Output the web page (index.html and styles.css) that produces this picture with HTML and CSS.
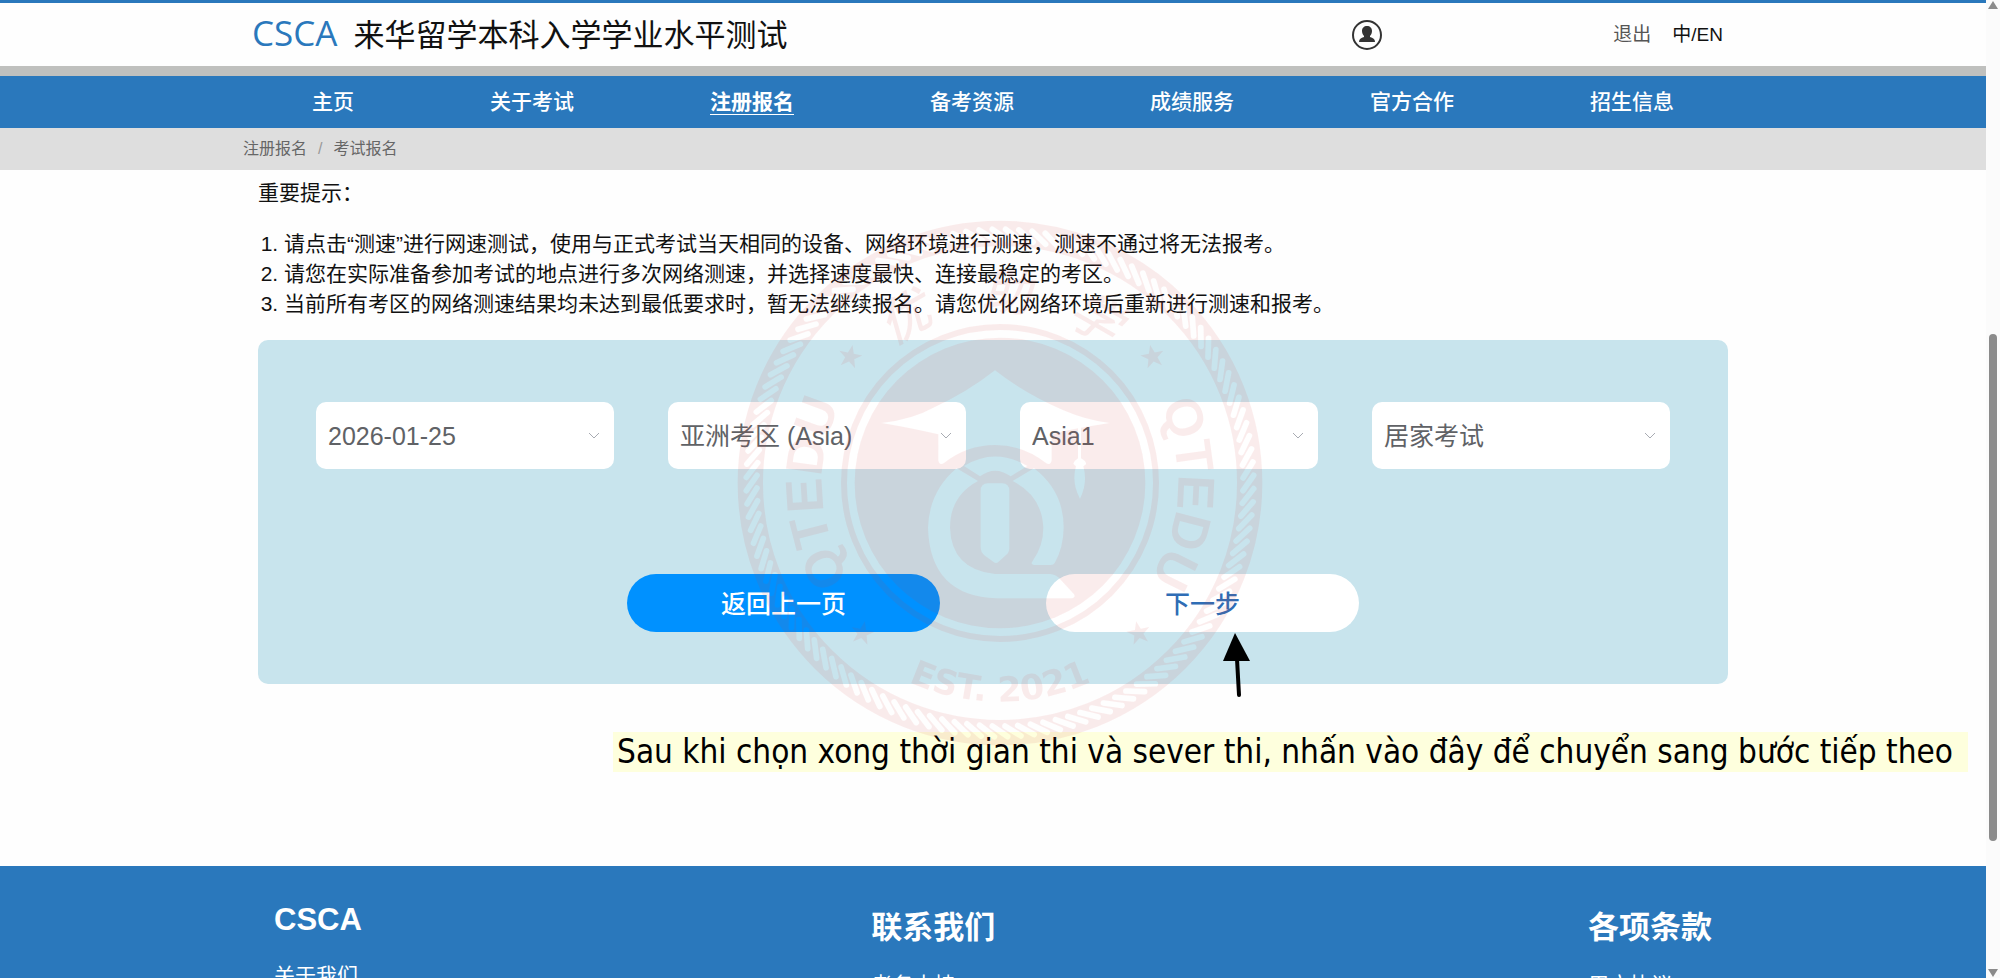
FILE: index.html
```html
<!DOCTYPE html>
<html lang="zh-CN">
<head>
    <meta charset="UTF-8">
    <meta name="viewport" content="width=device-width, initial-scale=1.0">
    <title>CSCA 考试报名</title>
    <link rel="stylesheet" href="styles.css">
</head>
<body>
    <div class="page">
        <header class="header">
            <div class="container header-inner">
                <h1 class="logo"><span class="logo-mark">CSCA</span>来华留学本科入学学业水平测试</h1>
                <div class="user">
                    <svg class="user-icon" viewBox="0 0 32 32" aria-hidden="true">
                        <circle cx="16" cy="16" r="14" fill="none" stroke="#333" stroke-width="2"/>
                        <path fill="#333" d="M16 7c3 0 5 2 5 5 0 2-1 4-2 5v1c3 1 5 2 5 5H8c0-3 2-4 5-5v-1c-1-1-2-3-2-5 0-3 2-5 5-5z"/>
                    </svg>
                    <a class="logout" href="#">退出</a>
                    <a class="lang" href="#">中/EN</a>
                </div>
            </div>
        </header>

        <nav class="nav">
            <a href="#">主页</a>
            <a href="#">关于考试</a>
            <a href="#" class="active">注册报名</a>
            <a href="#">备考资源</a>
            <a href="#">成绩服务</a>
            <a href="#">官方合作</a>
            <a href="#">招生信息</a>
        </nav>

        <div class="breadcrumb">
            <div class="container breadcrumb-inner">
                <a href="#">注册报名</a>
                <span class="slash">/</span>
                <a href="#">考试报名</a>
            </div>
        </div>

        <main class="container main">
            <!-- 重要提示 -->
            <p class="tips-title">重要提示：</p>
            <ol class="tips">
                <li>请点击“测速”进行网速测试，使用与正式考试当天相同的设备、网络环境进行测速，测速不通过将无法报考。</li>
                <li>请您在实际准备参加考试的地点进行多次网络测速，并选择速度最快、连接最稳定的考区。</li>
                <li>当前所有考区的网络测速结果均未达到最低要求时，暂无法继续报名。请您优化网络环境后重新进行测速和报考。</li>
            </ol>

            <!-- 考试选择 -->
            <form class="panel">
                <div class="selects">
                    <div class="select-box">
                        <select aria-label="考试日期"><option>2026-01-25</option></select>
                        <svg viewBox="0 0 12 8" aria-hidden="true"><path d="M1 1l5 5 5-5"/></svg>
                    </div>
                    <div class="select-box">
                        <select aria-label="考区"><option>亚洲考区 (Asia)</option></select>
                        <svg viewBox="0 0 12 8" aria-hidden="true"><path d="M1 1l5 5 5-5"/></svg>
                    </div>
                    <div class="select-box">
                        <select aria-label="服务器"><option>Asia1</option></select>
                        <svg viewBox="0 0 12 8" aria-hidden="true"><path d="M1 1l5 5 5-5"/></svg>
                    </div>
                    <div class="select-box">
                        <select aria-label="考试方式"><option>居家考试</option></select>
                        <svg viewBox="0 0 12 8" aria-hidden="true"><path d="M1 1l5 5 5-5"/></svg>
                    </div>
                </div>
                <div class="buttons">
                    <button type="button" class="btn btn-back">返回上一页</button>
                    <div class="next">
                        <button type="button" class="btn btn-next">下一步</button>
                        <svg class="arrow" viewBox="0 0 30 66" aria-hidden="true">
                            <path d="M13 0l15 28H1z"/>
                            <path d="M15 26l2 36" stroke="#000" stroke-width="4" stroke-linecap="round"/>
                        </svg>
                    </div>
                </div>
            </form>
        </main>

        <p class="note">Sau khi chọn xong thời gian thi và sever thi, nhấn vào đây để chuyển sang bước tiếp theo</p>

        <footer class="footer">
            <div class="container footer-inner">
                <div>
                    <h3>CSCA</h3>
                    <a href="#">关于我们</a>
                </div>
                <div>
                    <h3>联系我们</h3>
                    <a href="#">考务支持</a>
                </div>
                <div>
                    <h3>各项条款</h3>
                    <a href="#">用户协议</a>
                </div>
            </div>
        </footer>
    </div>

    <div class="scrollbar" aria-hidden="true">
        <svg viewBox="0 0 12 10"><path d="M6 1l5 8H1z"/></svg>
        <div class="track"><div class="thumb"></div></div>
        <svg viewBox="0 0 12 10"><path d="M6 9l5-8H1z"/></svg>
    </div>

    <!-- 水印 -->
    <svg class="watermark" viewBox="0 0 1590 1590" aria-hidden="true">
        <defs>
            <line id="h1" x1="772" y1="34" x2="818" y2="66" stroke="#000" stroke-width="17" stroke-linecap="round"/>
            <g id="h5">
                <use href="#h1"/>
                <use href="#h1" transform="rotate(3 795 795)"/>
                <use href="#h1" transform="rotate(6 795 795)"/>
                <use href="#h1" transform="rotate(9 795 795)"/>
                <use href="#h1" transform="rotate(12 795 795)"/>
            </g>
            <g id="h20">
                <use href="#h5"/>
                <use href="#h5" transform="rotate(15 795 795)"/>
                <use href="#h5" transform="rotate(30 795 795)"/>
                <use href="#h5" transform="rotate(45 795 795)"/>
            </g>
            <mask id="rope" maskUnits="userSpaceOnUse" x="0" y="0" width="1590" height="1590">
                <rect width="1590" height="1590" fill="#fff"/>
                <use href="#h20"/>
                <use href="#h20" transform="rotate(60 795 795)"/>
                <use href="#h20" transform="rotate(120 795 795)"/>
                <use href="#h20" transform="rotate(180 795 795)"/>
                <use href="#h20" transform="rotate(240 795 795)"/>
                <use href="#h20" transform="rotate(300 795 795)"/>
            </mask>
            <mask id="emblem" maskUnits="userSpaceOnUse" x="0" y="0" width="1590" height="1590">
                <rect width="1590" height="1590" fill="#fff"/>
                <g transform="translate(345 399)" fill="#000">
                    <!-- cap -->
                    <path d="M435 58Q520 125 640 178Q710 208 778 216Q720 226 693 230V322Q710 332 708 340L700 346Q714 395 690 443Q664 395 678 346L670 338Q672 330 684 322V232Q640 240 605 250V328Q602 345 588 336Q520 282 435 282Q350 282 282 336Q268 345 265 328V250Q190 232 95 216Q190 204 250 170Q350 125 435 58z"/>
                    <!-- letter Q -->
                    <path d="M342 345Q435 288 532 345L482 376Q435 342 390 376z"/>
                    <path d="M320 352L384 390Q300 435 300 530Q304 655 435 669H600Q618 670 632 686L672 730Q678 740 664 742H440Q240 735 234 530Q238 420 320 352z"/>
                    <path d="M552 352Q641 420 641 530Q640 590 614 636Q610 642 602 642H552Q540 640 548 630Q580 585 580 530Q576 435 488 390z"/>
                    <path d="M414 397H456Q478 397 478 420V590Q478 604 468 612L444 634Q438 638 432 634L402 612Q392 602 392 590V420Q392 397 414 397z"/>
                </g>
            </mask>
            <path id="star" d="M0-37L9-12H35L14 4L22 30L0 14L-22 30L-14 4L-35-12H-9z"/>
            <path id="arc-left" d="M795 1329A534 534 0 0 1 795 261"/>
            <path id="arc-right" d="M795 261A534 534 0 0 1 795 1329"/>
            <path id="arc-bottom" d="M139 795A656 656 0 0 0 1451 795"/>
        </defs>
        <g class="seal">
            <circle cx="795" cy="795" r="749" fill="none" stroke="#d33c3c" stroke-width="76" mask="url(#rope)"/>
            <circle cx="795" cy="795" r="468" fill="none" stroke="#d33c3c" stroke-width="18"/>
            <circle cx="795" cy="795" r="436" mask="url(#emblem)"/>
            <use href="#star" transform="translate(345 417) rotate(12)"/>
            <use href="#star" transform="translate(1253 417) rotate(-12)"/>
            <use href="#star" transform="translate(382 1246) rotate(12)"/>
            <use href="#star" transform="translate(1211 1246) rotate(-12)"/>
            <text class="seal-name"><textPath href="#arc-left" startOffset="48.2%">QTEDU</textPath></text>
            <text class="seal-name"><textPath href="#arc-right" startOffset="51.8%">QTEDU</textPath></text>
            <text class="seal-year"><textPath href="#arc-bottom" startOffset="50%">EST. 2021</textPath></text>
            <text class="seal-cn" x="795" y="276" transform="rotate(-30 795 795)">优</text>
            <text class="seal-cn" x="795" y="276" transform="rotate(2 795 795)">助</text>
            <text class="seal-cn" x="795" y="276" transform="rotate(30 795 795)">学</text>
        </g>
    </svg>
</body>
</html>
```
FILE: styles.css
```css
* {
    box-sizing: border-box;
}
body {
    margin: 0;
    height: 100vh;
    display: flex;
    overflow: hidden;
    position: relative;
    background-color: #fefefe;
    font-family: "Liberation Sans", "Noto Sans CJK SC", sans-serif;
    color: #111;
}
a {
    color: inherit;
    text-decoration: none;
}
.page {
    flex: 1;
    min-width: 0;
    overflow: hidden;
}
.container {
    max-width: 1500px;
    margin: 0 auto;
}

/* header */
.header {
    border-top: 3px solid #2a78bc;
    border-bottom: 10px solid #bfc0be;
}
.header-inner {
    display: flex;
    justify-content: space-between;
    align-items: center;
    height: 63px;
    padding: 0 20px 0 9px;
}
.logo {
    display: flex;
    align-items: baseline;
    gap: 16px;
    margin: 0;
    font-size: 31px;
    font-weight: 400;
    line-height: 44px;
}
.logo-mark {
    font-family: "Open Sans", sans-serif;
    font-size: 35px;
    color: #2a78bc;
}
.user {
    display: flex;
    align-items: center;
    font-size: 19px;
    line-height: 24px;
}
.user-icon {
    width: 32px;
    height: 32px;
    margin-right: 230px;
}
.logout {
    margin-right: 21px;
    color: #555;
}

/* nav */
.nav {
    display: flex;
    justify-content: center;
    align-items: center;
    gap: 136px;
    height: 52px;
    background-color: #2a78bc;
    color: white;
    font-size: 21px;
    font-weight: 500;
    line-height: 24px;
}
.nav a {
    border-bottom: 1px solid transparent;
}
.nav .active {
    font-weight: 700;
    border-bottom-color: white;
}
.breadcrumb {
    background-color: #dedede;
    color: #666;
    font-size: 16px;
    line-height: 20px;
}
.breadcrumb-inner {
    display: flex;
    align-items: center;
    gap: 11px;
    height: 42px;
}
.slash {
    color: #999;
}

/* main */
.main {
    padding: 0 15px;
    font-size: 21px;
    line-height: 30px;
}
.tips-title {
    margin: 8px 0 21px;
}
.tips {
    margin: 0 0 21px;
    padding-left: 26px;
}
.panel {
    padding: 62px 58px 52px;
    border-radius: 10px;
    background-color: #c8e4ed;
}
.selects {
    display: grid;
    grid-template-columns: repeat(4, 1fr);
    gap: 54px;
}
.select-box {
    position: relative;
}
.select-box select {
    display: block;
    width: 100%;
    height: 67px;
    padding: 0 12px;
    border: none;
    border-radius: 10px;
    background-color: white;
    color: #606266;
    font-family: inherit;
    font-size: 25px;
    appearance: none;
}
.select-box svg {
    position: absolute;
    right: 14px;
    top: 30px;
    width: 12px;
    height: 8px;
    fill: none;
    stroke: #a8abb2;
    pointer-events: none;
}
.buttons {
    display: flex;
    justify-content: center;
    gap: 106px;
    margin-top: 105px;
}
.btn {
    display: block;
    width: 313px;
    height: 58px;
    padding: 0 0 2px;
    border: none;
    border-radius: 29px;
    font-family: inherit;
    font-size: 25px;
    font-weight: 500;
    cursor: pointer;
}
.btn-back {
    background-color: #0091ff;
    color: white;
}
.btn-next {
    background-color: white;
    color: #2f6db5;
}
.next {
    position: relative;
}
.arrow {
    position: absolute;
    left: 176px;
    top: 59px;
    width: 30px;
    height: 66px;
}
.note {
    width: fit-content;
    margin: 48px 18px 94px auto;
    padding: 0 15px 0 4px;
    background-color: #feffdd;
    color: #000;
    font-family: "DejaVu Sans Condensed", "DejaVu Sans", sans-serif;
    font-size: 33px;
    line-height: 40px;
    white-space: nowrap;
}

/* footer */
.footer {
    background-color: #2a78bc;
    color: white;
}
.footer-inner {
    display: grid;
    grid-template-columns: 5fr 6fr auto;
    padding: 36px 31px;
    font-size: 21px;
    white-space: nowrap;
}
.footer h3 {
    margin: 0 0 21px;
    font-size: 31px;
}

/* scrollbar */
.scrollbar {
    display: flex;
    flex-direction: column;
    align-items: center;
    width: 14px;
    background-color: #fbfbfb;
}
.scrollbar svg {
    width: 12px;
    height: 10px;
    fill: #8b8b8b;
}
.track {
    flex: 1;
    padding-top: 324px;
}
.thumb {
    width: 8px;
    height: 80%;
    border-radius: 4px;
    background-color: #8b8b8b;
}

/* watermark */
.watermark {
    position: absolute;
    left: 50%;
    top: 218px;
    width: 530px;
    height: 530px;
    margin-left: -265px;
    pointer-events: none;
}
.seal {
    fill: #d33c3c;
    opacity: 0.09;
}
.seal text {
    text-anchor: middle;
    font-weight: 700;
}
.seal-name {
    font-size: 156px;
}
.seal-year {
    font-family: "DejaVu Sans", sans-serif;
    font-size: 104px;
}
.seal .seal-cn {
    font-size: 150px;
    font-style: italic;
    font-weight: 500;
}
```
